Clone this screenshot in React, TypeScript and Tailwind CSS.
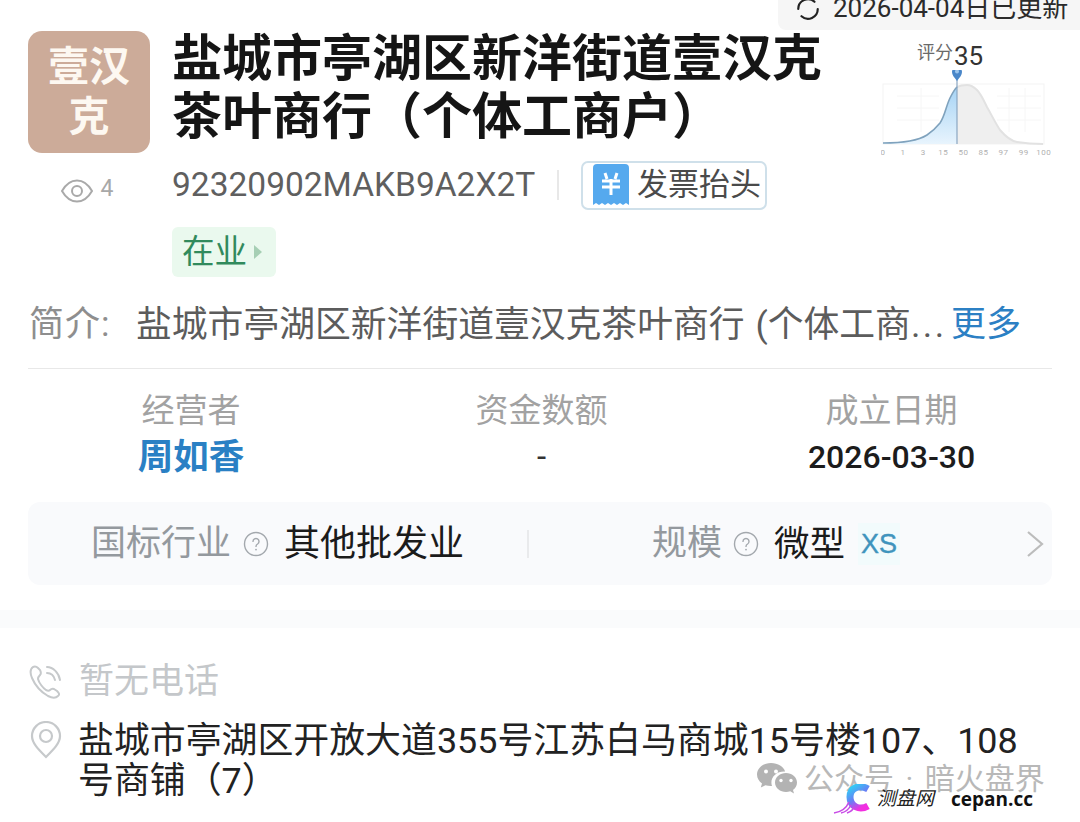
const cjk = "font-['Roboto','Noto_Sans_CJK_SC',sans-serif]";

function Hint() {
  return (
    <svg width="26" height="26" viewBox="0 0 26 26" fill="none" className="shrink-0">
      <circle cx="13" cy="13" r="11.5" stroke="#a3a8ad" strokeWidth="1.4" />
      <path d="M10 10.4a3 3 0 1 1 4.6 2.6c-1 .6-1.6 1.2-1.6 2.4" stroke="#a3a8ad" strokeWidth="1.4" strokeLinecap="round" />
      <circle cx="13" cy="18.6" r="0.9" fill="#a3a8ad" />
    </svg>
  );
}

function ScoreChart() {
  const labels = ["0", "1", "3", "15", "50", "85", "97", "99", "100"];
  return (
    <svg width="176" height="90" viewBox="0 70 176 90" className="block" style={{ fontFamily: "Roboto" }}>
      <defs>
        <linearGradient id="scoreFill" x1="0" y1="0" x2="0" y2="1">
          <stop offset="0" stopColor="#a5d3f5" />
          <stop offset="1" stopColor="#e8f4fd" />
        </linearGradient>
      </defs>
      {/* faint backing grid */}
      <rect x="2" y="84" width="161" height="60" fill="none" stroke="#f3f3f3" />
      <path d="M16 96H58M16 108H58M16 120H58M40 88V132M116 96H160M116 108H160M116 120H160M128 88V132M144 88V132" stroke="#f6f6f6" />
      {/* distribution above the score */}
      <path d="M76 87C80 85 83 85 86 85C90 85 93 87 96 90C100 94 103 101 106 107C110 114 115 124 119 130C125 137 130 141 136 142C142 143 150 144 162 144H76Z" fill="#efefef" />
      <path d="M76 87C80 85 83 85 86 85C90 85 93 87 96 90C100 94 103 101 106 107C110 114 115 124 119 130C125 137 130 141 136 142C142 143 150 144 162 144" fill="none" stroke="#e2e2e2" strokeWidth="2" />
      {/* distribution below the score */}
      <path d="M2 143C15 143 35 142 46 135C52 131 55 128 59 123C64 116 65 106 69 98C72 92 73 90 76 87V144H2Z" fill="url(#scoreFill)" />
      <path d="M2 143C15 143 35 142 46 135C52 131 55 128 59 123C64 116 65 106 69 98C72 92 73 90 76 87" fill="none" stroke="#7fa2bd" strokeWidth="1.6" />
      <path d="M76 80V144" stroke="#8aa6c2" strokeWidth="1.2" />
      <path d="M76 81C73 77 71 75 71 72A5 5 0 0 1 81 72C81 75 79 77 76 81Z" fill="#4a87c9" />
      <circle cx="76" cy="71.500" r="2" fill="#9cc5ec" />
      {labels.map((t, i) => (
        <text key={t} x={2 + i * 20.1} y="155" fontSize="8" letterSpacing="0.5" fill="#b0b0b0" textAnchor="middle">{t}</text>
      ))}
    </svg>
  );
}

function WeChatMark() {
  return (
    <svg width="42" height="34" viewBox="0 0 42 34" fill="#b3b3b3">
      <path d="M15 1C7 1 1 6 1 12.6c0 3.7 2 6.900 5 9l-1.200 4 4.600-2.400c1.800.5 3.600.8 5.600.8h1c-.4-1.100-.6-2.300-.6-3.500 0-6.200 5.700-11 12.700-11h1C27.900 4.700 22 1 15 1Z" />
      <path d="M41 20.500C41 15 35.800 11 30 11S19 15 19 20.500 24.200 30 30 30c1.500 0 2.900-.3 4.200-.7l3.800 2.200-1-3.500c2.500-1.800 4-4.500 4-7.500Z" />
      <circle cx="10" cy="9.500" r="2" fill="#fff" />
      <circle cx="20" cy="9.500" r="2" fill="#fff" />
      <circle cx="25" cy="18.500" r="1.700" fill="#fff" />
      <circle cx="35" cy="18.500" r="1.700" fill="#fff" />
    </svg>
  );
}

function CepanMark() {
  return (
    <svg width="38" height="30" viewBox="0 0 38 30" fill="none">
      <defs>
        <linearGradient id="cepanArc" x1="0" y1="0" x2="0.6" y2="1">
          <stop offset="0" stopColor="#2fd0f5" />
          <stop offset="0.55" stopColor="#6a7cf5" />
          <stop offset="1" stopColor="#f22fe0" />
        </linearGradient>
      </defs>
      <path d="M35 5C26 0 17 4 17 13c0 9 9 14 18 9" stroke="url(#cepanArc)" strokeWidth="7" />
      <path d="M1 29C8 28 13 25 16 18M8 29c5-1 8-4 10-8M14 29c3-1 6-3 7-6" stroke="#c84be6" strokeWidth="1.600" />
    </svg>
  );
}

export default function App() {
  return (
    <div className={`relative w-[1080px] h-[822px] overflow-hidden bg-white ${cjk}`}>
      {/* last-updated pill hanging from the top edge */}
      <div className="absolute right-0 top-0 w-[302px] h-[30px] bg-[#f6f6f6] rounded-bl-lg flex items-end overflow-hidden pl-[17px] gap-[12px] pb-[8px]">
        <svg width="26" height="26" viewBox="0 0 24 24" fill="none" className="shrink-0">
          <path d="M3 12a9 9 0 0 1 15-6.700M21 12a9 9 0 0 1-15 6.700" stroke="#222" strokeWidth="2" strokeLinecap="round" />
        </svg>
        <span className="text-[26px] leading-[28px] text-[#2b2b2b] whitespace-nowrap">2026-04-04日已更新</span>
      </div>

      {/* company header */}
      <header className="flex pl-[28px] pt-[31px] h-[280px]">
        <div className="w-[122px] shrink-0 flex flex-col items-center">
          <div className="w-[122px] h-[122px] rounded-[14px] bg-[#ccab99] text-[#fdf8f1] text-[41px] leading-[50px] font-bold flex flex-col items-center justify-center">
            <span>壹汉</span>
            <span>克</span>
          </div>
          <div className="flex items-center mt-[25px] gap-[7px] ml-[-5px] text-[#a8a8a8]">
            <svg width="34" height="26" viewBox="0 0 34 26" fill="none" stroke="#a9a9a9" strokeWidth="2">
              <path d="M2 13C6 6 11 2.500 17 2.500S28 6 32 13c-4 7-9 10.500-15 10.500S6 20 2 13Z" />
              <circle cx="17" cy="13" r="5" />
            </svg>
            <span className="text-[23px] leading-[22px] mt-[-5px]">4</span>
          </div>
        </div>

        <div className="ml-[23px] w-[660px] shrink-0">
          <h1 className="text-[50px] leading-[58px] font-bold text-[#151515] whitespace-nowrap mt-[-1px] ml-[-1px]">
            盐城市亭湖区新洋街道壹汉克
            <br />
            茶叶商行（个体工商户）
          </h1>
          <div className="flex items-center mt-[14px] ml-[-1px]">
            <span className="text-[33.500px] leading-[50px] text-[#5f5f5f] whitespace-nowrap w-[366px] font-['Roboto',sans-serif]">92320902MAKB9A2X2T</span>
            <span className="w-[2px] h-[30px] bg-[#e8e8e8] ml-[19px]" />
            <div className="ml-[22px] w-[186px] h-[49px] rounded-[7px] border-2 border-[#cfe0ea] flex items-center pl-[10px] gap-[8px] shrink-0">
              <svg width="36" height="42" viewBox="0 0 36 42" fill="none">
                <path d="M0 4a4 4 0 0 1 4-4h28a4 4 0 0 1 4 4v37l-3-2-3 2-3-2-3 2-3-2-3 2-3-2-3 2-3-2-3 2-3-2-3 2Z" fill="#55a9ee" />
                <path d="M12 9l2 6M24 9l-2 6M9 17h18M9 23h18M18 15v16" stroke="#fff" strokeWidth="3" />
              </svg>
              <span className="text-[31px] leading-[40px] text-[#4a4a4a] whitespace-nowrap">发票抬头</span>
            </div>
          </div>
          <div className="mt-[17px] ml-[-1px] w-[104px] h-[50px] rounded-[6px] bg-[#eaf9ee] flex items-center pl-[10px]">
            <span className="text-[32.500px] leading-[40px] text-[#318a5c]">在业</span>
            <span className="ml-[7px] w-0 h-0 border-y-[7px] border-y-transparent border-l-[8px] border-l-[#a6cfb4]" />
          </div>
        </div>

        <div className="ml-[48px] mt-[7px] w-[176px] flex flex-col items-start">
          <div className="flex ml-[36px] whitespace-nowrap h-[32px]">
            <span className="text-[18px] leading-[28px] text-[#6a6a6a] mt-[1px]">评分</span>
            <span className="ml-[1px] text-[26px] leading-[28px] text-[#333] mt-[4px]">35</span>
          </div>
          <ScoreChart />
        </div>
      </header>

      {/* brief */}
      <section className="mx-[28px] h-[89px] border-b border-[#e8e8e8] flex items-start pt-[22px]">
        <span className="ml-[1px] w-[107px] text-[35px] tracking-[1px] leading-[46px] text-[#8e8e8e] whitespace-nowrap">简介:</span>
        <span className="w-[815px] text-[35.800px] leading-[46px] text-[#5c5c5c] whitespace-nowrap overflow-hidden [word-spacing:2px]">
          盐城市亭湖区新洋街道壹汉克茶叶商行 (个体工商<span className="tracking-[2.500px]">...</span>
        </span>
        <span className="text-[35px] leading-[46px] text-[#2c80c4] whitespace-nowrap">更多</span>
      </section>

      {/* key figures */}
      <section className="grid grid-cols-[326px_375px_325px] mx-[28px] h-[133px] text-center">
        <div className="pt-[19px]">
          <div className="text-[33px] leading-[46px] text-[#a2a2a2]">经营者</div>
          <div className="text-[35.500px] leading-[46px] font-bold text-[#2a80c4]">周如香</div>
        </div>
        <div className="pt-[19px]">
          <div className="text-[33px] leading-[46px] text-[#a2a2a2]">资金数额</div>
          <div className="text-[33px] leading-[46px] text-[#333]">-</div>
        </div>
        <div className="pt-[19px]">
          <div className="text-[33px] leading-[46px] text-[#a2a2a2]">成立日期</div>
          <div className="text-[32px] leading-[46px] font-medium text-[#1c1c1c] font-['Roboto',sans-serif]">2026-03-30</div>
        </div>
      </section>

      {/* industry and scale */}
      <section className="mx-[28px] h-[83px] rounded-[12px] bg-[#f9fafc] flex items-center text-[35px] leading-[46px]">
        <span className="ml-[63px] text-[#94999e] whitespace-nowrap">国标行业</span>
        <span className="ml-[12px]"><Hint /></span>
        <span className="ml-[15px] text-[36px] text-[#1b1b1b] whitespace-nowrap">其他批发业</span>
        <span className="ml-[63px] w-[2px] h-[28px] bg-[#e9eaec]" />
        <span className="ml-[123px] text-[#94999e] whitespace-nowrap">规模</span>
        <span className="ml-[11px]"><Hint /></span>
        <span className="ml-[15px] text-[35.500px] text-[#1b1b1b] whitespace-nowrap">微型</span>
        <span className="ml-[13px] w-[42px] h-[42px] bg-[#f2fbfc] flex items-center justify-center text-[27px] [-webkit-text-stroke:0.4px_#3f94bd] text-[#3f94bd] font-['Liberation_Sans',sans-serif]">XS</span>
        <svg width="18" height="28" viewBox="0 0 18 28" fill="none" className="ml-[126px]">
          <path d="M2 2l14 12L2 26" stroke="#bcbcbc" strokeWidth="2.200" />
        </svg>
      </section>

      <div className="h-[25px]" />
      <div className="h-[18px] bg-[#fafbfc]" />

      {/* contact lines */}
      <section className="pl-[28px] pt-[32px]">
        <div className="flex items-center h-[44px]">
          <svg width="36" height="36" viewBox="0 0 36 36" fill="none" stroke="#c6c9cb" strokeWidth="2" className="shrink-0">
            <path d="M5 3c-3 2-3 6-1 11 3 7 9 14 16 18 4 2 8 2 10 0 2-1.500 1-3-1-5l-3-2c-2-1-3 0-4 1-1 1-2 1-4 0-3-2-7-7-8-11 0-2 1-3 2-4s1-3 0-5L10 4C8 2 7 2 5 3Z" />
            <path d="M19 3c6 0 12 6 13 13M19 9c4 0 7 3 8 7" strokeLinecap="round" />
          </svg>
          <span className="ml-[15px] text-[35px] leading-[44px] text-[#c4c7ca] whitespace-nowrap">暂无电话</span>
        </div>
        <div className="flex mt-[17px]">
          <svg width="36" height="38" viewBox="0 0 36 38" fill="none" stroke="#c6c9cb" strokeWidth="2.200" className="shrink-0">
            <path d="M18 36C10 28 4 22 4 15a14 14 0 0 1 28 0c0 7-6 13-14 21Z" />
            <circle cx="18" cy="15" r="6" />
          </svg>
          <p className="ml-[14px] w-[960px] text-[35.900px] leading-[40px] text-[#222]">
            盐城市亭湖区开放大道355号江苏白马商城15号楼107、108
            <br />
            号商铺（7）
          </p>
        </div>
      </section>

      {/* stamped marks along the lower right corner */}
      <div className="absolute left-[756px] top-[762px] flex items-center gap-[6px]">
        <WeChatMark />
        <span className="text-[30px] leading-[34px] text-[#b8b8b8] whitespace-nowrap [word-spacing:4px]">公众号 · 暗火盘界</span>
      </div>
      <div className="absolute left-[833px] top-[784px] flex items-center">
        <CepanMark />
        <span className="ml-[6px] text-[19px] leading-[30px] italic text-[#222] whitespace-nowrap">测盘网</span>
        <span className="ml-[17px] text-[19px] leading-[30px] font-bold text-[#111] whitespace-nowrap font-['Open_Sans',sans-serif]">cepan.cc</span>
      </div>
    </div>
  );
}
